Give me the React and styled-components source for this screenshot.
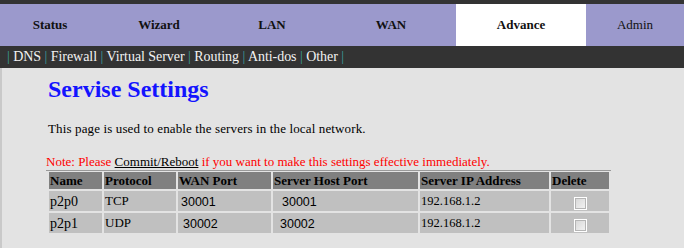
import React from "react";
import styled, { createGlobalStyle } from "styled-components";

const serif = '"Liberation Serif", "Times New Roman", Times, serif';
const sans = '"Liberation Sans", Arial, sans-serif';

const GlobalStyle = createGlobalStyle`
  html, body {
    margin: 0;
    padding: 0;
    background: #e3e3e3;
    font-family: ${serif};
  }
`;

const tabs = [
  { label: "Status", width: 100 },
  { label: "Wizard", width: 118 },
  { label: "LAN", width: 108 },
  { label: "WAN", width: 130 },
  { label: "Advance", width: 130, active: true },
  { label: "Admin", width: 98, plain: true },
];

const subItems = ["DNS", "Firewall", "Virtual Server", "Routing", "Anti-dos", "Other"];

const columns = [
  { label: "Name", width: 53 },
  { label: "Protocol", width: 72 },
  { label: "WAN Port", width: 93 },
  { label: "Server Host Port", width: 145 },
  { label: "Server IP Address", width: 129 },
  { label: "Delete", width: 58 },
];

const rows = [
  { name: "p2p0", proto: "TCP", wan: "30001", host: "30001", ip: "192.168.1.2", wanPad: 3, hostPad: 9 },
  { name: "p2p1", proto: "UDP", wan: "30002", host: "30002", ip: "192.168.1.2", wanPad: 5, hostPad: 7 },
];

const Page = styled.div`
  width: 684px;
  min-height: 248px;
  background: #e3e3e3;
  font-family: ${serif};
`;

const TopStrip = styled.div`
  height: 4px;
  background: #333;
`;

const NavBar = styled.div`
  display: flex;
  height: 42px;
  background: #9b99cc;
`;

const Tab = styled.div`
  width: ${({ $w }) => $w}px;
  display: flex;
  align-items: center;
  justify-content: center;
  font-size: 13px;
  font-weight: ${({ $plain }) => ($plain ? "normal" : "bold")};
  color: #111;
  background: ${({ $active }) => ($active ? "#fff" : "transparent")};
`;

const SubBar = styled.div`
  height: 22px;
  background: #333;
  display: flex;
  align-items: center;
  padding-left: 7px;
  font-size: 14px;
  letter-spacing: -0.05px;
  color: #f2f2f2;
  white-space: pre;
`;

const Sep = styled.span`
  color: #3b9e9e;
`;

const Content = styled.div`
  border-left: 2px solid #c9c9c9;
  padding: 6px 0 20px 46px;
`;

const Title = styled.h1`
  margin: 0;
  font-size: 24px;
  line-height: 30px;
  font-weight: bold;
  color: #1414ff;
`;

const Text = styled.p`
  margin: ${({ $mt }) => $mt}px 0 0 ${({ $ml }) => $ml ?? 0}px;
  font-size: 13px;
  line-height: 16px;
  letter-spacing: ${({ $ls }) => $ls ?? 0}px;
  color: ${({ $red }) => ($red ? "#ff0000" : "#000")};
`;

const Link = styled.span`
  color: #000;
  text-decoration: underline;
`;

const Rule = styled.div`
  width: 565px;
  margin-left: -2px;
  border-top: 1px solid #999;
`;

const Table = styled.table`
  margin-left: -1px;
  margin-top: -1px;
  border-spacing: 2px;
  table-layout: fixed;
  width: 564px;
`;

const Th = styled.th`
  box-sizing: border-box;
  width: ${({ $w }) => $w}px;
  height: 17px;
  padding: 0 0 0 1px;
  background: #808080;
  text-align: left;
  font-family: ${serif};
  font-size: 13px;
  font-weight: bold;
  color: #000;
`;

const Td = styled.td`
  height: 18px;
  padding: ${({ $top }) => $top ?? 1}px 0 0 ${({ $pad }) => $pad ?? 1}px;
  background: #c0c0c0;
  font-size: ${({ $size }) => $size ?? 13}px;
  font-family: ${({ $sans }) => ($sans ? sans : serif)};
  color: #000;
  text-align: ${({ $center }) => ($center ? "center" : "left")};
  vertical-align: middle;
`;

const Box = styled.span`
  display: inline-block;
  width: 11px;
  height: 11px;
  margin-top: 1px;
  border: 1px solid #fff;
  background: linear-gradient(135deg, #d6d6d6, #f4f4f4);
  box-shadow: 0 0 0 1px #b5b5b5 inset;
  vertical-align: middle;
`;

export default function App() {
  return (
    <>
      <GlobalStyle />
      <Page>
        <TopStrip />
        <NavBar>
          {tabs.map((t) => (
            <Tab key={t.label} $w={t.width} $active={t.active} $plain={t.plain}>
              {t.label}
            </Tab>
          ))}
        </NavBar>
        <SubBar>
          <Sep>|</Sep>
          {subItems.map((s) => (
            <React.Fragment key={s}>
              {" " + s + " "}
              <Sep>|</Sep>
            </React.Fragment>
          ))}
        </SubBar>
        <Content>
          <Title>Servise Settings</Title>
          <Text $mt={17} $ls={0.13}>
            This page is used to enable the servers in the local network.
          </Text>
          <Text $red $mt={17} $ml={-2}>
            Note: Please <Link>Commit/Reboot</Link> if you want to make this settings effective
            immediately.
          </Text>
          <Rule />
          <Table>
            <thead>
              <tr>
                {columns.map((c) => (
                  <Th key={c.label} $w={c.width}>
                    {c.label}
                  </Th>
                ))}
              </tr>
            </thead>
            <tbody>
              {rows.map((r) => (
                <tr key={r.name}>
                  <Td $size={14}>{r.name}</Td>
                  <Td $top={0}>{r.proto}</Td>
                  <Td $sans $size={12.5} $pad={r.wanPad} $top={2}>
                    {r.wan}
                  </Td>
                  <Td $sans $size={12.5} $pad={r.hostPad} $top={2}>
                    {r.host}
                  </Td>
                  <Td $size={12.5}>{r.ip}</Td>
                  <Td $center>
                    <Box />
                  </Td>
                </tr>
              ))}
            </tbody>
          </Table>
        </Content>
      </Page>
    </>
  );
}
